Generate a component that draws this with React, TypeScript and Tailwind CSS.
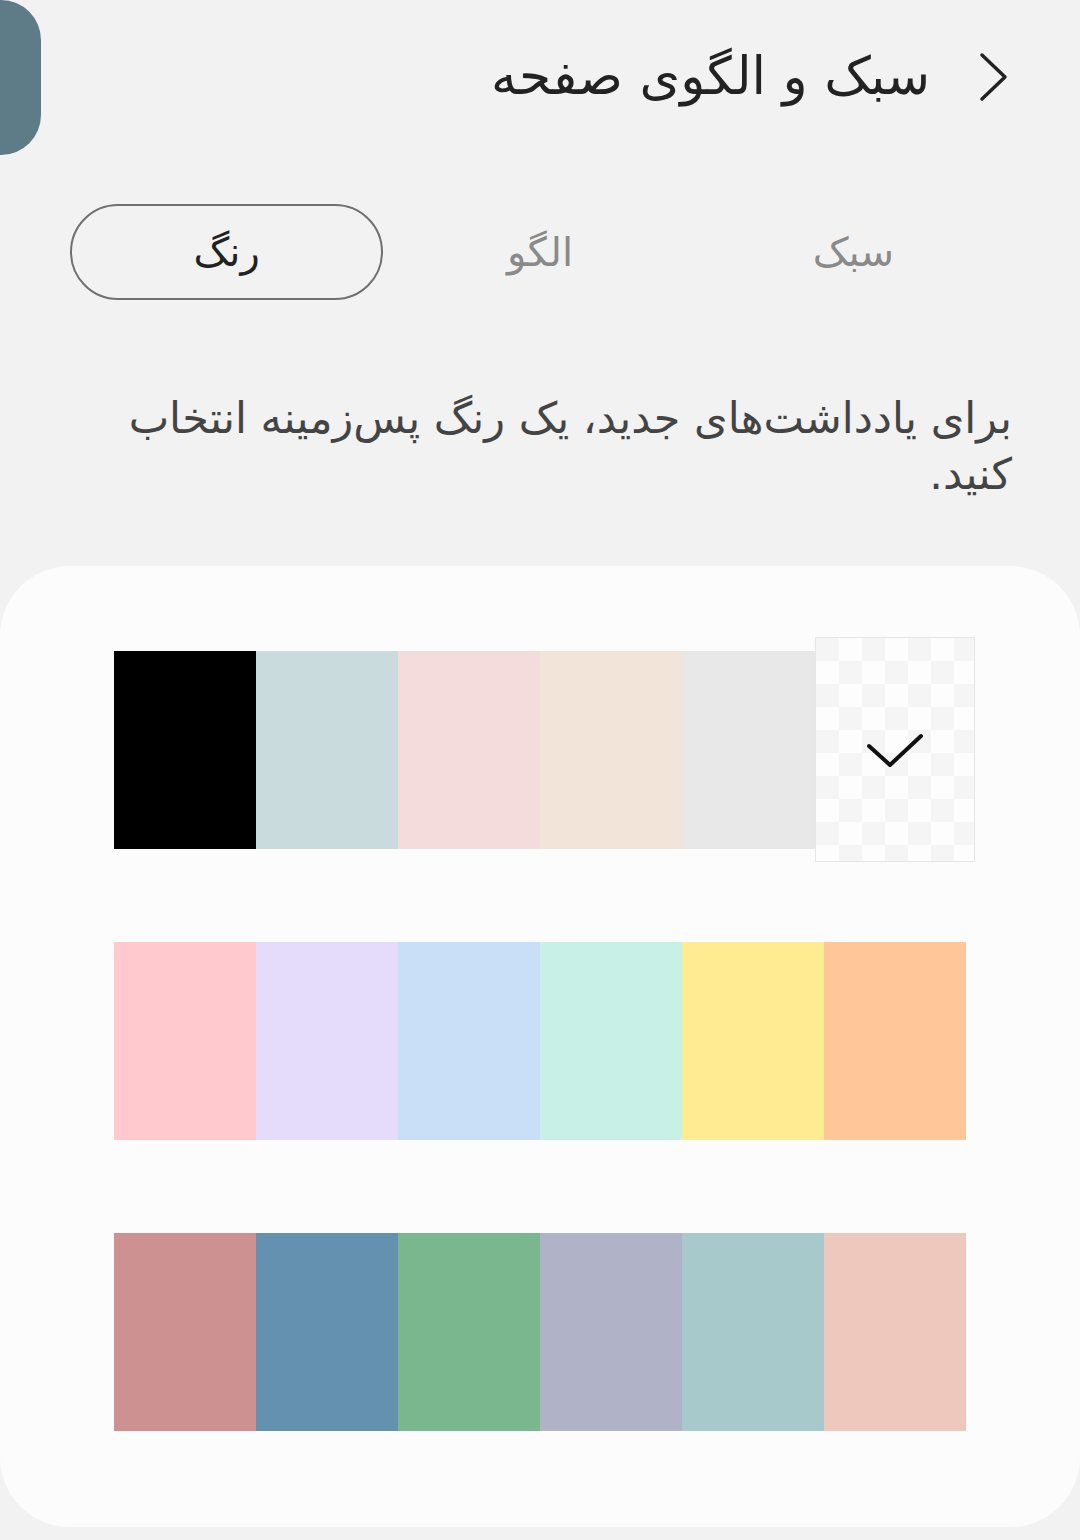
import React from "react";

const row1 = ["#000000", "#cadbde", "#f4dcdc", "#f3e4da", "#e8e8e8"];
const row2 = ["#ffc9ce", "#e5dbfa", "#c8dff7", "#c8f0e6", "#ffeb91", "#ffc69a"];
const row3 = ["#cc9190", "#6591b0", "#7ab68e", "#b0b2c7", "#a7c9cb", "#eec8bc"];

function Row({ colors }: { colors: string[] }) {
  return (
    <div className="flex h-[198px]">
      {colors.map((c, i) => (
        <div key={i} className="w-[142px] h-full" style={{ backgroundColor: c }} />
      ))}
    </div>
  );
}

export default function App() {
  return (
    <div
      className="w-[1080px] h-[1540px] bg-[#f2f2f2] overflow-hidden"
      style={{ fontFamily: '"DejaVu Sans", "Noto Sans", sans-serif' }}
    >
      <div className="relative h-[155px]">
        <div className="absolute left-0 top-0 w-[41px] h-[155px] bg-[#5e7b88] rounded-r-[40px]" />
        <div dir="rtl" className="flex items-center h-[155px] pr-[70px] gap-[48px]">
          <svg width="32" height="50" viewBox="0 0 32 50" className="-mt-[2px]">
            <path d="M4 3 L27 25 L4 47" fill="none" stroke="#222" strokeWidth="3.5" strokeLinecap="round" strokeLinejoin="round" />
          </svg>
          <div className="text-[52px] text-[#222] leading-none -mt-[4px]">سبک و الگوی صفحه</div>
        </div>
      </div>

      <div dir="rtl" className="grid grid-cols-3 mx-[70px] mt-[49px] h-[96px]">
        <div className="flex items-center justify-center text-[40px] text-[#8a8a8a]">سبک</div>
        <div className="flex items-center justify-center text-[40px] text-[#8a8a8a]">الگو</div>
        <div className="flex items-center justify-center text-[40px] text-[#222] border-2 border-[#707070] rounded-full">رنگ</div>
      </div>

      <div dir="rtl" className="px-[68px] mt-[90px] text-[43px] leading-[56px] text-[#444]">
        برای یادداشت‌های جدید، یک رنگ پس‌زمینه انتخاب
        <br />
        کنید.
      </div>

      <div className="mt-[64px] bg-[#fcfcfc] rounded-[70px] h-[961px] pt-[85px] px-[114px]">
        <div className="flex flex-col gap-[93px]">
          <div className="flex h-[198px]">
            {row1.map((c, i) => (
              <div key={i} className="w-[142px] h-full" style={{ backgroundColor: c }} />
            ))}
            <div className="relative w-[142px] h-full">
              <div className="absolute -left-[9px] -right-[9px] -top-[14px] -bottom-[13px] border border-[#e6e6e6] bg-[conic-gradient(#fdfdfd_25%,#f5f5f5_0_50%,#fdfdfd_0_75%,#f5f5f5_0)] bg-[length:46px_46px] flex items-center justify-center">
                <svg width="60" height="36" viewBox="0 0 60 36">
                  <path d="M4 14 L25 33 L56 4" fill="none" stroke="#111" strokeWidth="4" strokeLinecap="round" strokeLinejoin="round" />
                </svg>
              </div>
            </div>
          </div>
          <Row colors={row2} />
          <Row colors={row3} />
        </div>
      </div>
    </div>
  );
}
